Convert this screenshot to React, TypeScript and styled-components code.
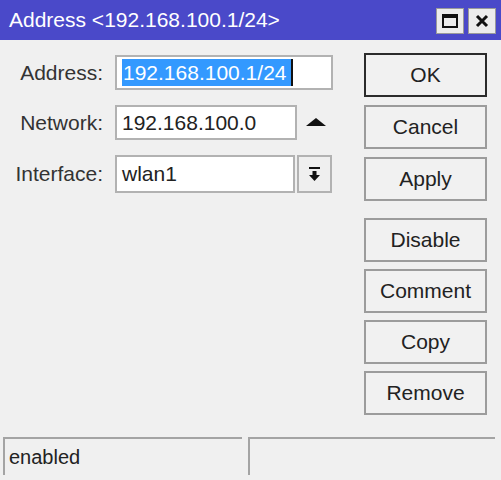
import styled, { createGlobalStyle } from "styled-components";

const GlobalStyle = createGlobalStyle`
  html, body {
    margin: 0;
    padding: 0;
    background: #f0f0f0;
  }
  body {
    font-family: "Liberation Sans", Arial, sans-serif;
  }
`;

const buttons = [
  { label: "OK", primary: true },
  { label: "Cancel" },
  { label: "Apply" },
];

const actions = ["Disable", "Comment", "Copy", "Remove"];

const App = () => {
  return (
    <Window>
      <GlobalStyle />
      <TitleBar>
        <Title>Address &lt;192.168.100.1/24&gt;</Title>
        <TitleControls>
          <TitleButton>
            <svg width="16" height="14" viewBox="0 0 16 14">
              <rect x="1" y="1" width="14" height="12" fill="none" stroke="#111" strokeWidth="2" />
              <rect x="1" y="1" width="14" height="3" fill="#111" />
            </svg>
          </TitleButton>
          <TitleButton>
            <svg width="14" height="14" viewBox="0 0 14 14">
              <path d="M2 2 L12 12 M12 2 L2 12" stroke="#111" strokeWidth="3" />
            </svg>
          </TitleButton>
        </TitleControls>
      </TitleBar>

      <Body>
        <Form>
          <FieldRow $height={35}>
            <Label>Address:</Label>
            <Input $width={218}>
              <Selected>192.168.100.1/24</Selected>
              <Caret />
            </Input>
          </FieldRow>
          <FieldRow $height={35}>
            <Label>Network:</Label>
            <Input $width={182}>192.168.100.0</Input>
            <ArrowUp>
              <svg width="20" height="8" viewBox="0 0 20 8">
                <path d="M10 0 L20 8 L0 8 Z" fill="#111" />
              </svg>
            </ArrowUp>
          </FieldRow>
          <FieldRow $height={38}>
            <Label>Interface:</Label>
            <Input $width={180}>wlan1</Input>
            <DropButton>
              <svg width="11" height="14" viewBox="0 0 11 14">
                <rect x="0" y="0" width="11" height="2" fill="#111" />
                <rect x="3.5" y="4" width="4" height="4" fill="#111" />
                <path d="M0 8 L11 8 L5.5 14 Z" fill="#111" />
              </svg>
            </DropButton>
          </FieldRow>
        </Form>

        <ButtonColumn>
          <ButtonGroup>
            {buttons.map((b) => (
              <DialogButton key={b.label} $primary={b.primary}>
                {b.label}
              </DialogButton>
            ))}
          </ButtonGroup>
          <ButtonGroup $tight>
            {actions.map((a) => (
              <DialogButton key={a}>{a}</DialogButton>
            ))}
          </ButtonGroup>
        </ButtonColumn>
      </Body>

      <StatusBar>
        <StatusCell $width={239}>enabled</StatusCell>
        <StatusCell $width={247} />
      </StatusBar>
    </Window>
  );
};

export default App;

const Window = styled.div`
  width: 501px;
  height: 480px;
  display: flex;
  flex-direction: column;
  background: #f0f0f0;
  overflow: hidden;
`;

const TitleBar = styled.div`
  height: 40px;
  flex: none;
  display: flex;
  align-items: center;
  padding: 0 5px 0 9px;
  background: #4a49c9;
  color: #fff;
`;

const Title = styled.div`
  flex: 1;
  font-size: 21px;
  line-height: 1;
  margin-top: -1px;
`;

const TitleControls = styled.div`
  display: flex;
  gap: 4px;
  align-self: flex-start;
  margin-top: 8px;
`;

const TitleButton = styled.div`
  width: 26px;
  height: 24px;
  display: flex;
  align-items: center;
  justify-content: center;
  background: #ececec;
  border: 1px solid #9a9a9a;
`;

const Body = styled.div`
  height: 397px;
  flex: none;
  display: flex;
`;

const Form = styled.div`
  flex: 1;
  display: flex;
  flex-direction: column;
  gap: 15px;
  padding-top: 15px;
`;

const FieldRow = styled.div<{ $height: number }>`
  height: ${(p) => p.$height}px;
  display: flex;
  align-items: stretch;
`;

const Label = styled.div`
  width: 103px;
  margin-right: 12px;
  text-align: right;
  font-size: 21px;
  color: #333;
  display: flex;
  align-items: center;
  justify-content: flex-end;
`;

const Input = styled.div<{ $width: number }>`
  width: ${(p) => p.$width}px;
  box-sizing: border-box;
  display: flex;
  align-items: center;
  padding-left: 5px;
  background: #fff;
  border: 2px solid #b2b2b2;
  font-size: 21px;
  color: #222;
  white-space: nowrap;
`;

const Selected = styled.span`
  background: #3399ff;
  color: #fff;
  line-height: 27px;
  padding: 0 4px 0 1px;
`;

const Caret = styled.span`
  width: 2px;
  height: 27px;
  background: #111;
`;

const ArrowUp = styled.div`
  display: flex;
  align-items: center;
  margin-left: 9px;
  padding-bottom: 1px;
`;

const DropButton = styled.div`
  width: 35px;
  margin-left: 2px;
  box-sizing: border-box;
  display: flex;
  align-items: center;
  justify-content: center;
  border: 2px solid #b2b2b2;
  background: #efefef;
`;

const ButtonColumn = styled.div`
  width: 123px;
  margin-right: 14px;
  padding-top: 13px;
  display: flex;
  flex-direction: column;
  gap: 17px;
`;

const ButtonGroup = styled.div<{ $tight?: boolean }>`
  display: flex;
  flex-direction: column;
  gap: ${(p) => (p.$tight ? 7 : 8)}px;
`;

const DialogButton = styled.div<{ $primary?: boolean }>`
  height: 44px;
  box-sizing: border-box;
  display: flex;
  align-items: center;
  justify-content: center;
  background: #f1f1f1;
  border: 2px solid ${(p) => (p.$primary ? "#2b2b2b" : "#9c9c9c")};
  font-size: 21px;
  color: #222;
`;

const StatusBar = styled.div`
  height: 38px;
  flex: none;
  display: flex;
  gap: 6px;
  padding-left: 3px;
`;

const StatusCell = styled.div<{ $width: number }>`
  width: ${(p) => p.$width}px;
  box-sizing: border-box;
  display: flex;
  align-items: center;
  padding-left: 4px;
  border-top: 2px solid #a4a4a4;
  border-left: 2px solid #a4a4a4;
  font-size: 20px;
  color: #222;
`;
